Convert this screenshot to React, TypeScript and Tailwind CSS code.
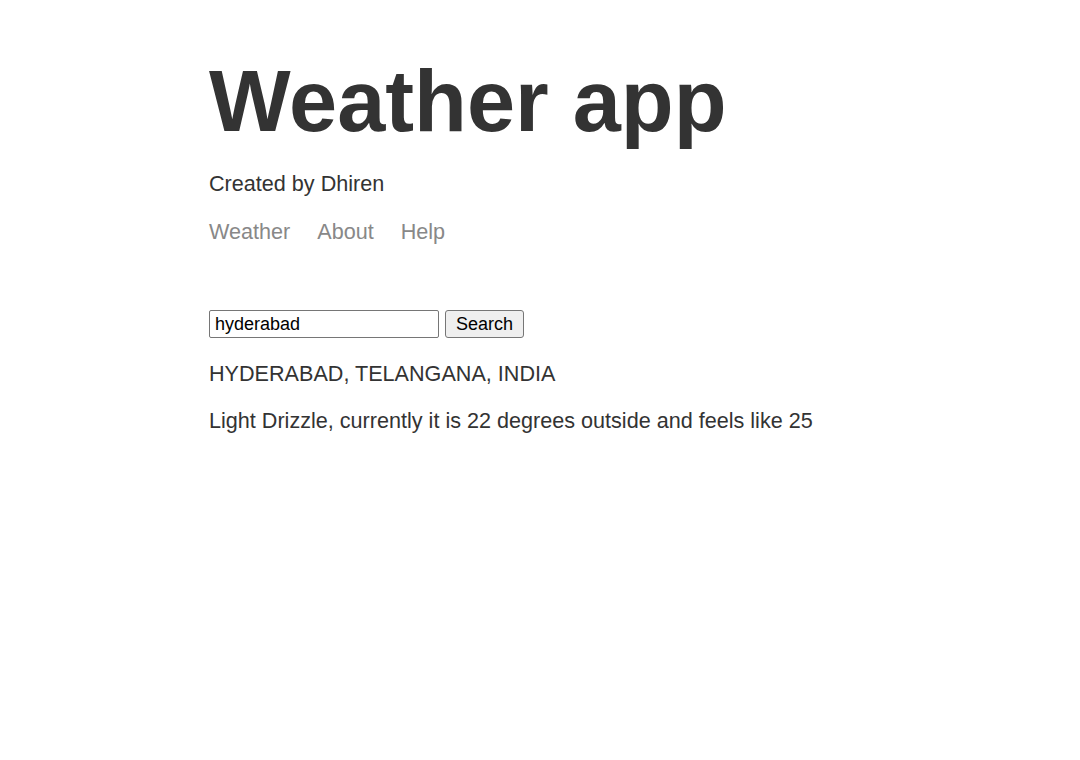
import React from "react";

export default function App() {
  return (
    <div
      className="min-h-[760px] bg-white text-[#333333]"
      style={{ fontFamily: '"Liberation Sans", Arial, sans-serif' }}
    >
      <div className="mx-auto w-[662px] pt-[52px]">
        <h1 className="text-[86.5px] font-bold leading-[99px]">Weather app</h1>
        <p className="mt-[20px] text-[21.6px] leading-[25px]">Created by Dhiren</p>
        <nav className="mt-[23px] flex gap-[27px] text-[21.6px] leading-[25px] text-[#888888]">
          <a href="#">Weather</a>
          <a href="#">About</a>
          <a href="#">Help</a>
        </nav>
        <form className="mt-[66px] flex items-center gap-[6px]" onSubmit={(e) => e.preventDefault()}>
          <input
            defaultValue="hyderabad"
            className="h-[28px] w-[230px] rounded-[2px] border border-[#767676] bg-white px-[5px] text-[18px] text-black outline-none"
            style={{ fontFamily: '"Liberation Sans", Arial, sans-serif' }}
          />
          <button
            type="submit"
            className="h-[28px] w-[79px] rounded-[3px] border border-[#767676] bg-[#efefef] text-[18px] text-black"
            style={{ fontFamily: '"Liberation Sans", Arial, sans-serif' }}
          >
            Search
          </button>
        </form>
        <p className="mt-[23px] text-[21.6px] leading-[25px]">HYDERABAD, TELANGANA, INDIA</p>
        <p className="mt-[22px] text-[21.6px] leading-[25px]">
          Light Drizzle, currently it is 22 degrees outside and feels like 25
        </p>
      </div>
    </div>
  );
}
